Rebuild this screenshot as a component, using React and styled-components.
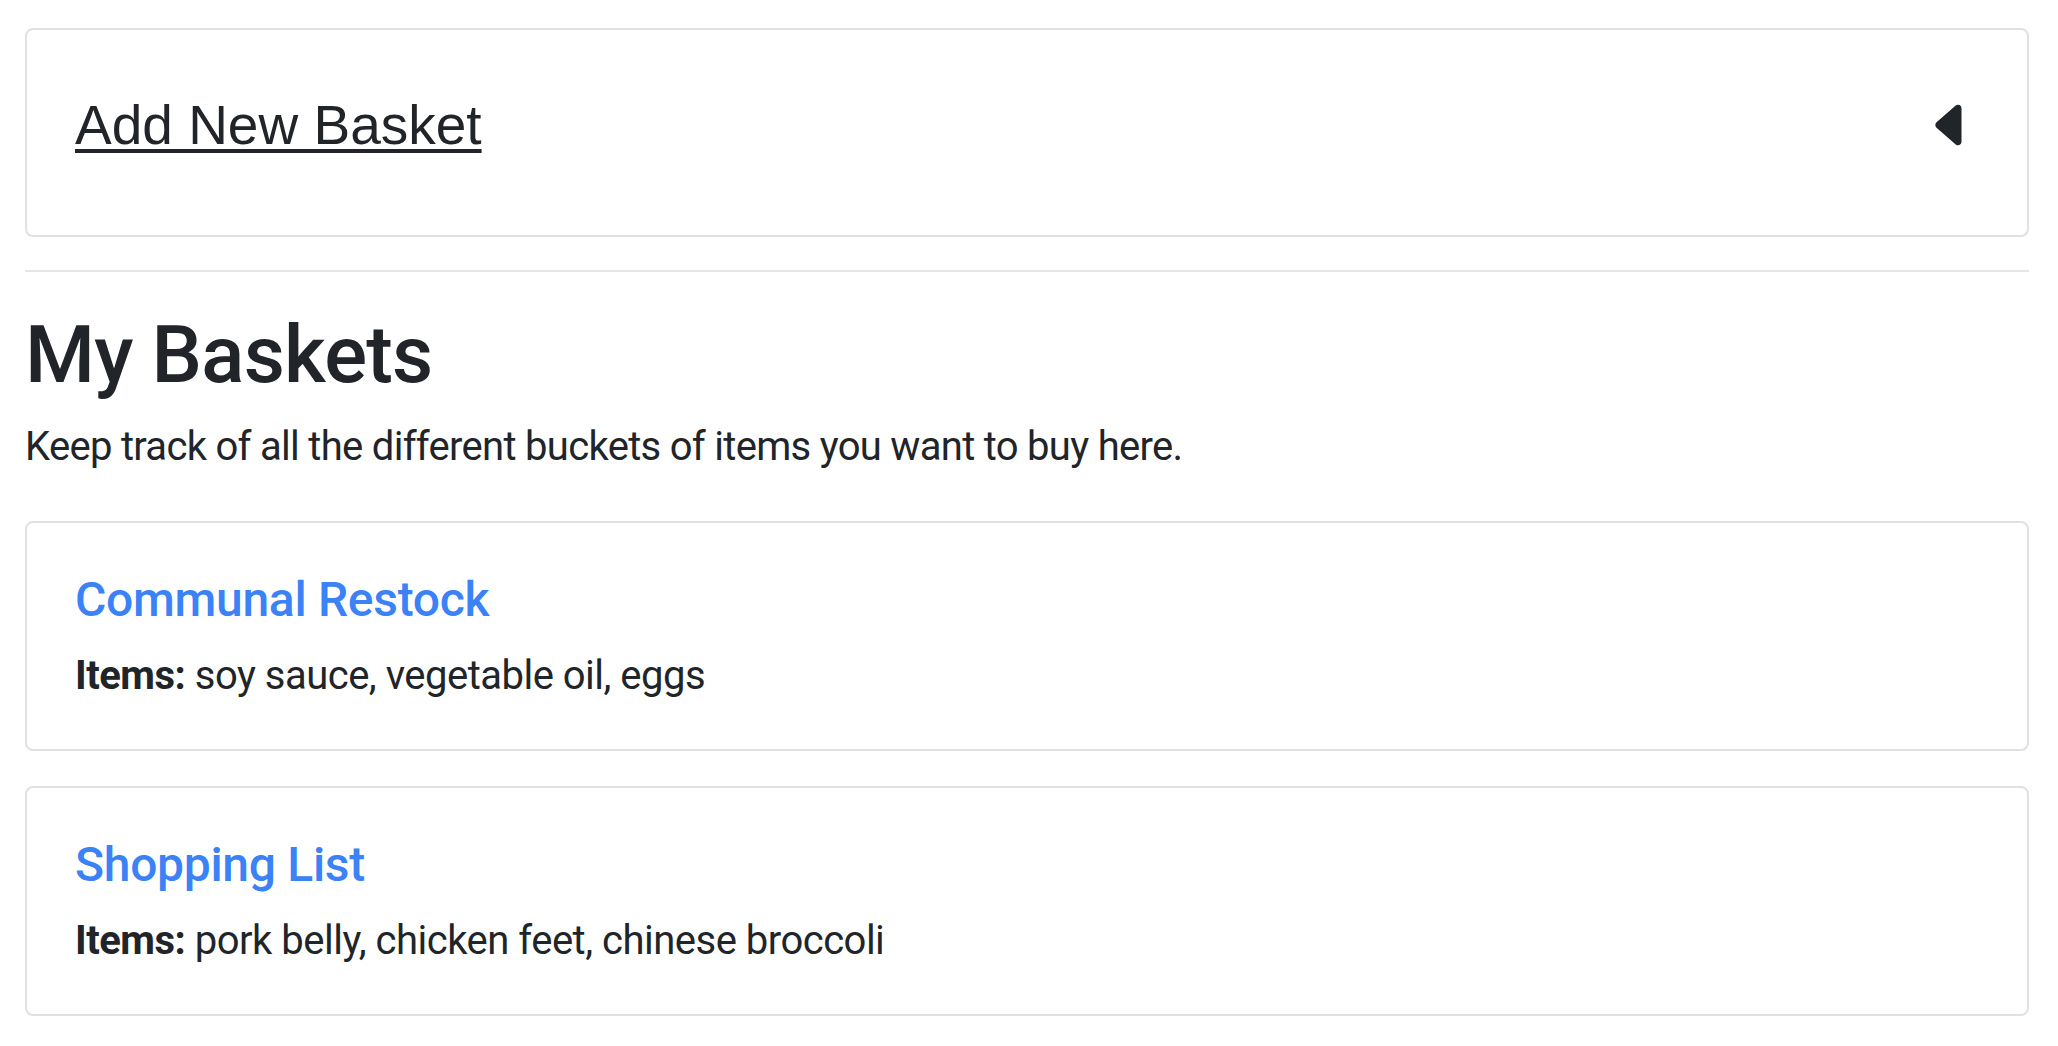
import React from "react";
import styled, { createGlobalStyle } from "styled-components";

const GlobalStyle = createGlobalStyle`
  html, body { margin: 0; padding: 0; background: #ffffff; }
  body {
    font-family: Roboto, Inter, "Liberation Sans", sans-serif;
    color: #212529;
    -webkit-font-smoothing: antialiased;
  }
  * { box-sizing: border-box; }
`;

const Page = styled.main`
  padding: 28px 29px 0 25px;
  display: flex;
  flex-direction: column;
`;

const Card = styled.section`
  border: 2px solid #dfe1e5;
  border-radius: 8px;
  background: #fff;
  padding: ${(p) => p.$pad};
  margin-bottom: ${(p) => p.$gap || "0"};
`;

const AddRow = styled.div`
  display: flex;
  align-items: center;
  justify-content: space-between;
`;

const AddTitle = styled.h3`
  margin: 0;
  font-family: "Liberation Sans", Arial, sans-serif;
  font-size: 55px;
  font-weight: 400;
  line-height: 66px;
  color: #212529;
  text-decoration: underline;
  text-decoration-thickness: 4px;
  text-underline-offset: 5px;
  cursor: pointer;
`;

const Caret = styled.svg`
  width: 56px;
  height: 56px;
  flex: none;
  fill: #212529;
`;

const Rule = styled.hr`
  margin: 33px 0 0;
  border: 0;
  border-top: 2px solid #e6e6e6;
`;

const Heading = styled.h1`
  margin: 35px 0 0;
  font-size: 80px;
  font-weight: 500;
  line-height: 96px;
  letter-spacing: -0.8px;
`;

const Lead = styled.p`
  margin: 14px 0 44px;
  font-size: 40px;
  line-height: 60px;
  font-weight: 400;
  letter-spacing: -0.7px;
`;

const BasketTitle = styled.a`
  display: block;
  font-size: 48px;
  font-weight: 500;
  line-height: 58px;
  color: #3b82f6;
  text-decoration: none;
  letter-spacing: -0.3px;
  margin-bottom: 17px;
`;

const ItemsText = styled.p`
  margin: 0;
  font-size: 40px;
  line-height: 60px;
  letter-spacing: -0.5px;
`;

const Label = styled.strong`
  font-weight: 700;
`;

const baskets = [
  { name: "Communal Restock", items: "soy sauce, vegetable oil, eggs" },
  { name: "Shopping List", items: "pork belly, chicken feet, chinese broccoli" },
];

export default function App() {
  return (
    <>
      <GlobalStyle />
      <Page>
        <Card $pad="62px 48px 77px">
          <AddRow>
            <AddTitle>Add New Basket</AddTitle>
            <Caret viewBox="0 0 16 16" aria-hidden="true">
              <path d="m3.86 8.753 5.482 4.796c.646.566 1.658.106 1.658-.753V3.204a1 1 0 0 0-1.659-.753l-5.48 4.796a1 1 0 0 0 0 1.506z" />
            </Caret>
          </AddRow>
        </Card>
        <Rule />
        <Heading>My Baskets</Heading>
        <Lead>Keep track of all the different buckets of items you want to buy here.</Lead>
        {baskets.map((b, i) => (
          <Card key={b.name} $pad="48px 48px 43px" $gap={i < baskets.length - 1 ? "35px" : "0"}>
            <BasketTitle href="#">{b.name}</BasketTitle>
            <ItemsText>
              <Label>Items:</Label> {b.items}
            </ItemsText>
          </Card>
        ))}
      </Page>
    </>
  );
}
